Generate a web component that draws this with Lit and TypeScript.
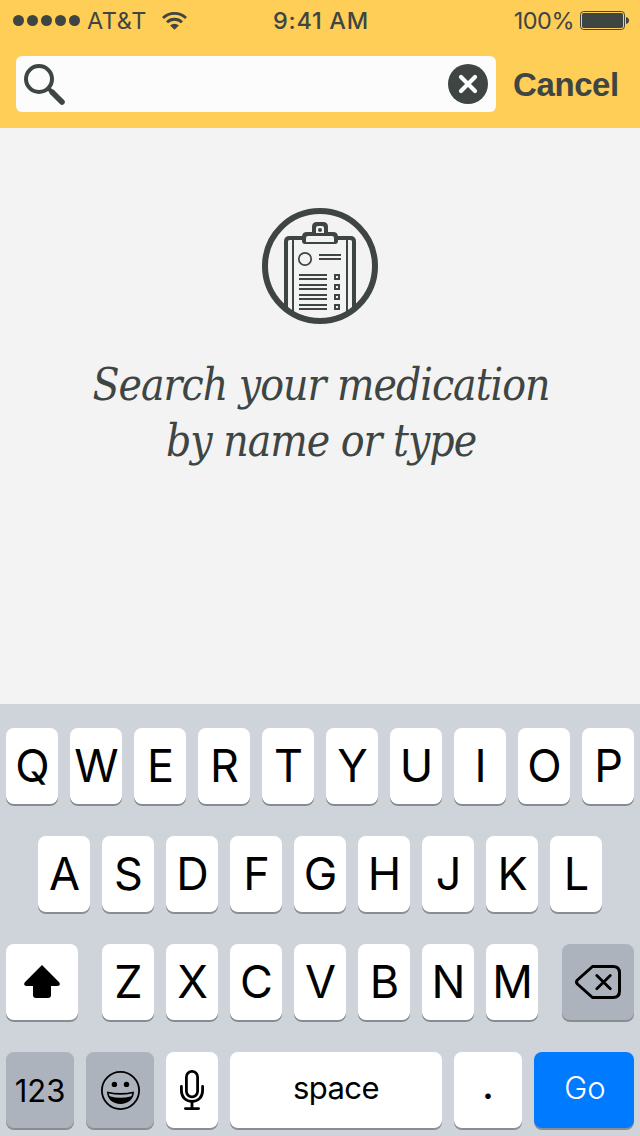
import { LitElement, html, css, svg } from "lit";
import { customElement, property } from "lit/decorators.js";

const shiftIcon = svg`<path d="M18 0 L35.4 17.6 Q37 21 33 21 H27 V30 Q27 33 24 33 H12 Q9 33 9 30 V21 H3 Q-1 21 .6 17.6 Z" fill="#000"/>`;

const deleteIcon = svg`
  <g fill="none" stroke="#000" stroke-width="3" stroke-linecap="round" stroke-linejoin="round">
    <path d="M17.5 1.5 H38 Q44.5 1.5 44.5 8 V26 Q44.5 32.5 38 32.5 H17.5 L2.4 19 Q.6 17 2.4 15 Z"/>
    <path d="M21.8 10.4 L35.3 23.8 M35.3 10.4 L21.8 23.8" stroke-width="2.8"/>
  </g>`;

const smileyIcon = svg`
  <circle cx="19.5" cy="19.5" r="18.6" fill="none" stroke="#000" stroke-width="1.8"/>
  <circle cx="13.4" cy="13.4" r="2.7"/>
  <circle cx="25.5" cy="13.4" r="2.7"/>
  <path d="M6 20.6 Q19.5 23.6 33 20.6 C33 28.4 27 33 19.5 33 C12 33 6 28.4 6 20.6 Z"/>
  <path d="M7.8 22.5 Q19.5 25 31.2 22.5 Q31 24 30.2 25.2 Q19.5 28.2 8.8 25.2 Q8 24 7.8 22.5 Z" fill="#acb3bd"/>`;

const micIcon = svg`
  <g fill="none" stroke="#000" stroke-width="2.8" stroke-linecap="round">
    <rect x="6.4" y="1.4" width="11.2" height="25.4" rx="5.6"/>
    <path d="M1.4 16.4 V20.4 C1.4 27 5.6 31.4 12 31.4 C18.4 31.4 22.6 27 22.6 20.4 V16.4"/>
    <path d="M12 32 V38 M5.4 38.6 H18.6"/>
  </g>`;

interface KeySpec {
  label?: string;
  icon?: unknown;
  w?: number;
  h?: number;
  kind?: string;
}

@customElement("keyboard-key")
class KeyboardKey extends LitElement {
  @property({ attribute: false }) spec: KeySpec = {};

  static styles = css`
    :host { display: block; height: 76px; }
    .key {
      box-sizing: border-box;
      height: 76px;
      display: flex;
      align-items: center;
      justify-content: center;
      border-radius: 8px;
      background: #fff;
      box-shadow: 0 2px 0 #898c90;
      color: #000;
      font: 400 45px/76px Inter, sans-serif;
    }
    .letter { padding-left: 1px; }
    .dark { background: #acb3bd; }
    .num { background: #acb3bd; font-size: 31px; padding-top: 2px; }
    .word { font-size: 31px; letter-spacing: -0.6px; padding-bottom: 4px; }
    .dot { font-size: 36px; font-weight: 600; padding-bottom: 8px; }
    .go { background: #007aff; color: #fff; font-size: 31px; font-weight: 300; padding-bottom: 4px; padding-left: 2px; }
    svg { display: block; overflow: visible; }
  `;

  render() {
    const { label, icon, w, h, kind } = this.spec;
    return html`<div class="key ${kind ?? ""}">${icon
      ? html`<svg width=${w} height=${h} viewBox="0 0 ${w} ${h}">${icon}</svg>`
      : label}</div>`;
  }
}

const letters = (s: string) =>
  s.split("").map((label) => html`<keyboard-key .spec=${{ label, kind: "letter" }}></keyboard-key>`);

@customElement("app-root")
class AppRoot extends LitElement {
  static styles = css`
    :host {
      display: flex;
      flex-direction: column;
      width: 640px;
      height: 1136px;
      overflow: hidden;
      background: #f3f3f3;
      color: #3e4543;
      font-family: Inter, sans-serif;
    }
    svg { display: block; flex: none; overflow: visible; }
    .top { height: 128px; background: #ffce57; }
    .status {
      display: grid;
      grid-template-columns: 1fr auto 1fr;
      height: 40px;
      box-sizing: border-box;
      padding: 0 11px 0 13px;
      font-size: 23.5px;
      line-height: 41px;
    }
    .left, .right { display: flex; align-items: center; }
    .right { justify-content: flex-end; }
    .carrier { margin: 0 15px 0 7px; letter-spacing: 0.6px; }
    .time { font-weight: 500; letter-spacing: 0.7px; }
    .percent { margin-right: 6px; letter-spacing: -0.5px; }
    .search { display: flex; align-items: center; padding: 16px 0 0 16px; }
    .field {
      display: flex;
      justify-content: space-between;
      box-sizing: border-box;
      width: 480px;
      height: 56px;
      padding: 8px;
      border-radius: 6px;
      background: #fcfcfc;
    }
    .cancel {
      margin-left: 17px;
      font: 700 33px/56px "Liberation Sans", sans-serif;
      letter-spacing: -0.4px;
      padding-top: 1px;
      height: 55px;
    }
    .empty {
      flex: 1;
      display: flex;
      flex-direction: column;
      align-items: center;
      padding-top: 80px;
    }
    .message {
      margin: 33px 0 0;
      padding-left: 2px;
      text-align: center;
      white-space: nowrap;
      font: italic 400 44px/56px "DejaVu Serif Condensed", "DejaVu Serif", serif;
      font-stretch: condensed;
      letter-spacing: -1px;
    }
    .keyboard {
      display: grid;
      grid-auto-rows: 76px;
      row-gap: 32px;
      box-sizing: border-box;
      height: 432px;
      padding: 24px 6px 0;
      background: #cfd3da;
    }
    .row { display: grid; column-gap: 12px; }
    .r1 { grid-template-columns: repeat(10, 52px); }
    .r2 { grid-template-columns: repeat(9, 52px); padding-left: 32px; }
    .r3 { grid-template-columns: 72px 1fr 72px; column-gap: 24px; }
    .mid { display: grid; grid-template-columns: repeat(7, 52px); column-gap: 12px; }
    .r4 { grid-template-columns: 68px 68px 52px 212px 68px 100px; }
  `;

  render() {
    return html`
      <div class="top">
        <div class="status">
          <div class="left">
            <svg width="67" height="11" viewBox="0 0 67 11" fill="#3e4543">
              ${[0, 1, 2, 3, 4].map((i) => svg`<circle cx=${5.5 + i * 14} cy="5.5" r="5.5"/>`)}
            </svg>
            <span class="carrier">AT&amp;T</span>
            <svg width="25" height="18" viewBox="0 0 25 18">
              <g fill="none" stroke="#3e4543" stroke-width="2.8">
                <path d="M1 6 A16.4 16.4 0 0 1 24 6"/>
                <path d="M5 10.3 A10.7 10.7 0 0 1 20 10.3"/>
              </g>
              <path d="M8.1 13.5 A6.3 6.3 0 0 1 16.9 13.5 L12.5 17.8 Z" fill="#3e4543"/>
            </svg>
          </div>
          <span class="time">9:41 AM</span>
          <div class="right">
            <span class="percent">100%</span>
            <svg width="49" height="19" viewBox="0 0 49 19">
              <rect x=".5" y=".5" width="44" height="18" rx="3.2" fill="none" stroke="#3e4543"/>
              <rect x="2" y="2" width="41" height="15" rx="1.8" fill="#3e4543"/>
              <path d="M46 6 Q49 6.6 49 9.5 Q49 12.4 46 13 Z" fill="#3e4543"/>
            </svg>
          </div>
        </div>
        <div class="search">
          <div class="field">
            <svg width="40" height="40" viewBox="0 0 40 40" fill="none" stroke="#3e4543">
              <circle cx="15" cy="15" r="13" stroke-width="4"/>
              <path d="M24 24 L28 28" stroke-width="4"/>
              <path d="M28.2 28.2 L38 38" stroke-width="5.6" stroke-linecap="round"/>
            </svg>
            <svg width="40" height="40" viewBox="0 0 40 40">
              <circle cx="20" cy="20" r="20" fill="#3e4543"/>
              <path d="M13 13 L27 27 M27 13 L13 27" stroke="#fcfcfc" stroke-width="4.2" stroke-linecap="round"/>
            </svg>
          </div>
          <span class="cancel">Cancel</span>
        </div>
      </div>

      <div class="empty">
        <svg width="116" height="116" viewBox="0 0 116 116" fill="none" stroke="#3e4543">
          <defs><clipPath id="disc"><circle cx="58" cy="58" r="55"/></clipPath></defs>
          <g clip-path="url(#disc)">
            <path d="M24 116 V33.5 Q24 30 27.5 30 H88.5 Q92 30 92 33.5 V116" stroke-width="4"/>
            <path d="M31 30 V116 M85 30 V116" stroke-width="2"/>
            <path d="M40 36 V29 Q40 24 45 24 H50 V19 Q50 14 55 14 H61 Q66 14 66 19 V24 H71 Q76 24 76 29 V33 Q76 36 73 36 H43 Q40 36 40 33 Z" fill="#3e4543" stroke="none"/>
            <path d="M44 30 Q44 28 46 28 H70 Q72 28 72 30 V34 H44 Z" fill="#f3f3f3" stroke="none"/>
            <path d="M54 25 V20 Q54 18 56 18 H60 Q62 18 62 20 V25 Z" fill="#f3f3f3" stroke="none"/>
            <circle cx="58" cy="22" r="2" fill="#3e4543" stroke="none"/>
            <circle cx="43" cy="51" r="6.2" stroke-width="1.7"/>
            <path d="M57 47 H79 M57 51 H79" stroke-width="2"/>
            ${[66, 76, 86, 96].map((y) => svg`
              <path d="M37 ${y + 1} H65 M37 ${y + 5} H65" stroke-width="2"/>
              <rect x="73" y=${y + 1} width="4" height="4" stroke-width="2"/>`)}
          </g>
          <circle cx="58" cy="58" r="55" stroke-width="6"/>
        </svg>
        <p class="message">Search your medication<br>by name or type</p>
      </div>

      <div class="keyboard">
        <div class="row r1">${letters("QWERTYUIOP")}</div>
        <div class="row r2">${letters("ASDFGHJKL")}</div>
        <div class="row r3">
          <keyboard-key .spec=${{ icon: shiftIcon, w: 36, h: 34 }}></keyboard-key>
          <div class="mid">${letters("ZXCVBNM")}</div>
          <keyboard-key .spec=${{ icon: deleteIcon, w: 46, h: 34, kind: "dark" }}></keyboard-key>
        </div>
        <div class="row r4">
          <keyboard-key .spec=${{ label: "123", kind: "num" }}></keyboard-key>
          <keyboard-key .spec=${{ icon: smileyIcon, w: 39, h: 39, kind: "dark" }}></keyboard-key>
          <keyboard-key .spec=${{ icon: micIcon, w: 24, h: 40 }}></keyboard-key>
          <keyboard-key .spec=${{ label: "space", kind: "word" }}></keyboard-key>
          <keyboard-key .spec=${{ label: ".", kind: "dot" }}></keyboard-key>
          <keyboard-key .spec=${{ label: "Go", kind: "go" }}></keyboard-key>
        </div>
      </div>
    `;
  }
}
